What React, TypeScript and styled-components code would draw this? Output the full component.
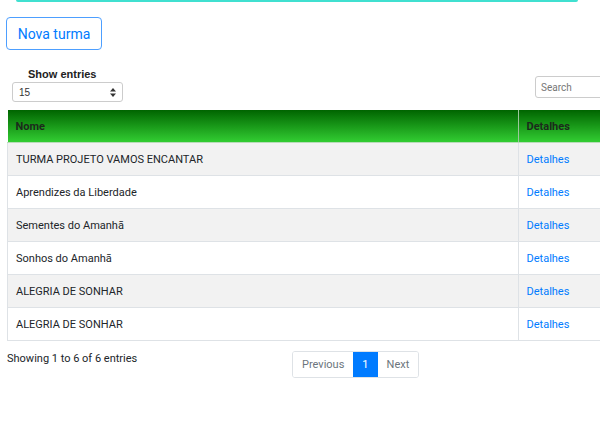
import React from 'react';
import styled, { createGlobalStyle } from 'styled-components';

const turmas = [
  'TURMA PROJETO VAMOS ENCANTAR',
  'Aprendizes da Liberdade',
  'Sementes do Amanhã',
  'Sonhos do Amanhã',
  'ALEGRIA DE SONHAR',
  'ALEGRIA DE SONHAR',
];

const App: React.FC = () => {
  return (
    <Page>
      <GlobalStyle />
      <TopLine />
      <NewButton>Nova turma</NewButton>
      <Controls>
        <LengthBox>
          <LengthLabel>Show entries</LengthLabel>
          <SelectBox>
            <span>15</span>
            <Arrows>
              <svg width="6" height="9" viewBox="0 0 6 9">
                <path d="M3 0 L6 3.5 H0 Z" fill="#333" />
                <path d="M3 9 L6 5.5 H0 Z" fill="#333" />
              </svg>
            </Arrows>
          </SelectBox>
        </LengthBox>
        <SearchInput placeholder="Search" />
      </Controls>
      <Table>
        <thead>
          <tr>
            <Th>Nome</Th>
            <Th $last>Detalhes</Th>
          </tr>
        </thead>
        <tbody>
          {turmas.map((nome, i) => (
            <Row key={i} $striped={i % 2 === 0}>
              <Td>{nome}</Td>
              <Td>
                <DetailLink href="#">Detalhes</DetailLink>
              </Td>
            </Row>
          ))}
        </tbody>
      </Table>
      <Footer>
        <Info>Showing 1 to 6 of 6 entries</Info>
        <Pager>
          <PageItem>Previous</PageItem>
          <PageItem $active>1</PageItem>
          <PageItem>Next</PageItem>
        </Pager>
      </Footer>
    </Page>
  );
};

export default App;

const GlobalStyle = createGlobalStyle`
  body {
    margin: 0;
    background: #fff;
    font-family: Roboto, "Liberation Sans", sans-serif;
    color: #212529;
    overflow: hidden;
  }
`;

const Page = styled.div`
  width: 660px;
  height: 444px;
`;

const TopLine = styled.div`
  width: 562px;
  height: 2px;
  margin-left: 16px;
  background: #40e0d0;
  border-radius: 0 0 3px 3px;
`;

const NewButton = styled.button`
  display: block;
  margin: 15px 0 0 6px;
  height: 33px;
  width: 96px;
  padding: 0;
  border: 1px solid #4d9fff;
  border-radius: 4px;
  background: #fff;
  color: #007bff;
  font-family: Roboto, sans-serif;
  font-size: 14px;
`;

const Controls = styled.div`
  display: flex;
  justify-content: space-between;
  align-items: flex-start;
  margin-top: 17px;
  padding-left: 12px;
`;

const LengthBox = styled.div`
  display: flex;
  flex-direction: column;
`;

const LengthLabel = styled.div`
  font-family: "Liberation Sans", Arial, sans-serif;
  font-weight: bold;
  font-size: 11px;
  line-height: 15px;
  color: #222;
  padding-left: 16px;
`;

const SelectBox = styled.div`
  box-sizing: border-box;
  width: 111px;
  height: 20px;
  border: 1px solid #ccc;
  border-radius: 3px;
  display: flex;
  align-items: center;
  justify-content: space-between;
  padding: 0 6px;
  font-family: "Liberation Sans", Arial, sans-serif;
  font-size: 10px;
  color: #333;
`;

const Arrows = styled.span`
  display: flex;
  align-items: center;
`;

const SearchInput = styled.input`
  box-sizing: border-box;
  width: 125px;
  height: 22px;
  margin-top: 9px;
  border: 1px solid #ccc;
  border-radius: 3px;
  padding: 0 5px;
  font-family: Roboto, sans-serif;
  font-size: 10px;
  &::placeholder {
    color: #777;
  }
`;

const Table = styled.table`
  margin: 8px 0 0 7px;
  width: 640px;
  border-collapse: collapse;
  font-size: 11px;
`;

const Th = styled.th<{ $last?: boolean }>`
  height: 32px;
  padding: 0 8px;
  text-align: left;
  font-weight: bold;
  font-size: 11px;
  color: #1c2a1c;
  background: linear-gradient(to bottom, #006400, #32cd32);
  border-left: ${(p) => (p.$last ? '1px solid #9cc79c' : 'none')};
  border-bottom: 1px solid #b9dbb9;
  width: ${(p) => (p.$last ? 'auto' : '494px')};
`;

const Row = styled.tr<{ $striped: boolean }>`
  background: ${(p) => (p.$striped ? '#f2f2f2' : '#fff')};
`;

const Td = styled.td`
  height: 32px;
  padding: 0 8px;
  border-bottom: 1px solid #dee2e6;
  border-left: 1px solid #dee2e6;
  color: #212529;
`;

const DetailLink = styled.a`
  color: #007bff;
  text-decoration: none;
`;

const Footer = styled.div`
  display: flex;
  align-items: flex-start;
  margin-top: 10px;
  padding-left: 7px;
`;

const Info = styled.div`
  width: 285px;
  font-size: 11px;
  line-height: 16px;
  color: #212529;
`;

const Pager = styled.div`
  display: flex;
  border: 1px solid #dee2e6;
  border-radius: 3px;
  overflow: hidden;
  height: 25px;
`;

const PageItem = styled.span<{ $active?: boolean }>`
  display: flex;
  align-items: center;
  padding: 0 9px;
  font-size: 11px;
  background: ${(p) => (p.$active ? '#007bff' : '#fff')};
  color: ${(p) => (p.$active ? '#fff' : '#6c757d')};
`;
